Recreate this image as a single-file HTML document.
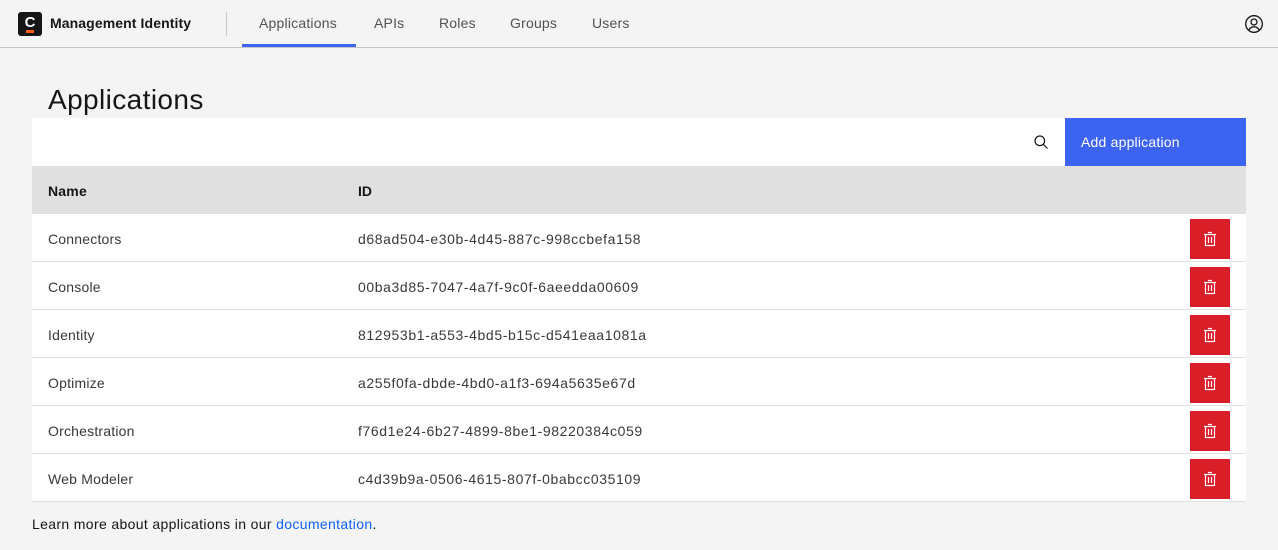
<!DOCTYPE html>
<html><head><style>
*{box-sizing:border-box;margin:0;padding:0}
body{width:1278px;height:550px;background:#f4f4f4;font-family:"Liberation Sans",sans-serif;color:#161616;position:relative;overflow:hidden}
.hdr{position:absolute;left:0;top:0;width:1278px;height:48px;border-bottom:1px solid #c6c6c6;background:#f4f4f4}
.logo{position:absolute;left:18px;top:12px;width:24px;height:24px;background:#161616;border-radius:3px;color:#fff;font-weight:bold;font-size:15px;text-align:center;line-height:21px}
.logo i{position:absolute;left:8px;top:18px;width:8px;height:3px;background:#fc5d0d}
.brand{position:absolute;left:50px;top:15px;font-size:14px;font-weight:bold;letter-spacing:.1px}
.sep{position:absolute;left:226px;top:12px;width:1px;height:24px;background:#c6c6c6}
.tab{position:absolute;top:15px;font-size:14px;color:#525252;letter-spacing:.2px}
.ul{position:absolute;left:242px;top:44px;width:114px;height:3px;background:#3d63f2}
h1{position:absolute;left:48px;top:84px;font-size:28px;font-weight:300;color:#161616;letter-spacing:.4px}
.tb{position:absolute;left:32px;top:118px;width:1214px;height:48px;background:#fff}
.btn{position:absolute;right:0;top:0;width:181px;height:48px;background:#3d63f2;color:#fff;font-size:14px;padding:16px 16px;letter-spacing:.2px}
.th{position:absolute;left:32px;top:166px;width:1214px;height:48px;background:#e0e0e0;font-size:14px;font-weight:bold}
.row{position:absolute;left:32px;width:1214px;height:48px;background:#fff;border-bottom:1px solid #e0e0e0;font-size:14px;color:#393939}
.c1{position:absolute;left:16px;top:17px;letter-spacing:.2px}
.c2{position:absolute;left:326px;top:17px;letter-spacing:.6px}
.del{position:absolute;left:1158px;top:5px;width:40px;height:40px;background:#da1e28}
.del svg{position:absolute;left:12px;top:12px}
.foot{position:absolute;left:32px;top:516px;font-size:14px;color:#161616;letter-spacing:.35px}
.foot a{color:#0f62fe;text-decoration:none}
</style></head><body>
<div class="hdr">
<div class="logo">C<i></i></div>
<div class="brand">Management Identity</div>
<div class="sep"></div>
<div class="tab" style="left:259px">Applications</div>
<div class="tab" style="left:374px">APIs</div>
<div class="tab" style="left:439px">Roles</div>
<div class="tab" style="left:510px">Groups</div>
<div class="tab" style="left:592px">Users</div>
<div class="ul"></div>
<svg style="position:absolute;left:1244px;top:14px" width="20" height="20" viewBox="0 0 20 20" fill="none" stroke="#161616" stroke-width="1.3"><circle cx="10" cy="10" r="8.3"/><circle cx="10" cy="8" r="3"/><path d="M4.8 16c1.2-2.2 3-3.2 5.2-3.2s4 1 5.2 3.2"/></svg>
</div>
<h1>Applications</h1>
<div class="tb">
<svg style="position:absolute;left:1002px;top:17px" width="14" height="14" viewBox="0 0 14 14" fill="none" stroke="#161616" stroke-width="1.2"><circle cx="5.8" cy="5.8" r="4.8"/><path d="M9.3 9.3L13.5 13.5"/></svg>
<div class="btn">Add application</div>
</div>
<div class="th"><span class="c1">Name</span><span class="c2" style="letter-spacing:0">ID</span></div>

<div class="row" style="top:214px"><span class="c1">Connectors</span><span class="c2">d68ad504-e30b-4d45-887c-998ccbefa158</span><div class="del"><svg width="16" height="16" viewBox="0 0 16 16" fill="none" stroke="#fff" stroke-width="1.2"><path d="M2 3.5h12M6 1.5h4M3.5 3.5v11h9v-11M6.5 6v6M9.5 6v6"/></svg></div></div>
<div class="row" style="top:262px"><span class="c1">Console</span><span class="c2">00ba3d85-7047-4a7f-9c0f-6aeedda00609</span><div class="del"><svg width="16" height="16" viewBox="0 0 16 16" fill="none" stroke="#fff" stroke-width="1.2"><path d="M2 3.5h12M6 1.5h4M3.5 3.5v11h9v-11M6.5 6v6M9.5 6v6"/></svg></div></div>
<div class="row" style="top:310px"><span class="c1">Identity</span><span class="c2">812953b1-a553-4bd5-b15c-d541eaa1081a</span><div class="del"><svg width="16" height="16" viewBox="0 0 16 16" fill="none" stroke="#fff" stroke-width="1.2"><path d="M2 3.5h12M6 1.5h4M3.5 3.5v11h9v-11M6.5 6v6M9.5 6v6"/></svg></div></div>
<div class="row" style="top:358px"><span class="c1">Optimize</span><span class="c2">a255f0fa-dbde-4bd0-a1f3-694a5635e67d</span><div class="del"><svg width="16" height="16" viewBox="0 0 16 16" fill="none" stroke="#fff" stroke-width="1.2"><path d="M2 3.5h12M6 1.5h4M3.5 3.5v11h9v-11M6.5 6v6M9.5 6v6"/></svg></div></div>
<div class="row" style="top:406px"><span class="c1">Orchestration</span><span class="c2">f76d1e24-6b27-4899-8be1-98220384c059</span><div class="del"><svg width="16" height="16" viewBox="0 0 16 16" fill="none" stroke="#fff" stroke-width="1.2"><path d="M2 3.5h12M6 1.5h4M3.5 3.5v11h9v-11M6.5 6v6M9.5 6v6"/></svg></div></div>
<div class="row" style="top:454px"><span class="c1">Web Modeler</span><span class="c2">c4d39b9a-0506-4615-807f-0babcc035109</span><div class="del"><svg width="16" height="16" viewBox="0 0 16 16" fill="none" stroke="#fff" stroke-width="1.2"><path d="M2 3.5h12M6 1.5h4M3.5 3.5v11h9v-11M6.5 6v6M9.5 6v6"/></svg></div></div>

<div class="foot">Learn more about applications in our <a>documentation</a>.</div>
</body></html>
